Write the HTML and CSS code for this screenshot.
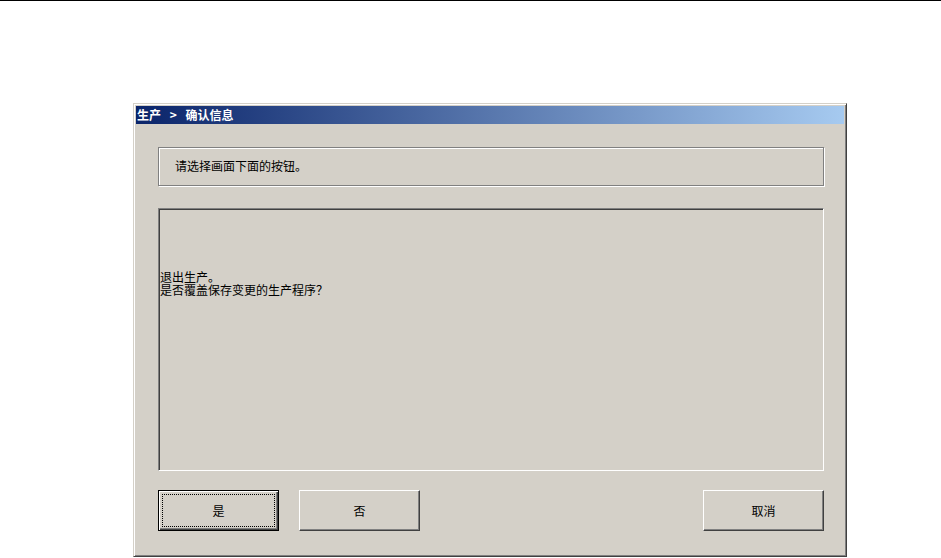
FILE: index.html
```html
<!DOCTYPE html>
<html lang="zh">
<head>
<meta charset="utf-8">
<title>确认信息</title>
<link rel="stylesheet" href="styles.css">
</head>
<body>
<div class="topline"></div>
<div class="window">
  <div class="titlebar">生产 &gt; 确认信息</div>
  <div class="content">
    <div class="hint">请选择画面下面的按钮。</div>
    <div class="message">
      <div class="msgline">退出生产。</div>
      <div class="msgline">是否覆盖保存变更的生产程序？</div>
    </div>
    <div class="buttons">
      <button class="btn default">是</button>
      <button class="btn">否</button>
      <button class="btn cancel">取消</button>
    </div>
  </div>
</div>
</body>
</html>
```
FILE: styles.css
```css
* { box-sizing: border-box; }
html, body { margin: 0; padding: 0; background: #fff; }
body {
  font-family: "Noto Sans CJK SC", "Liberation Sans", sans-serif;
  font-size: 12px;
  color: #000;
  width: 941px;
  height: 558px;
  overflow: hidden;
}
.topline { height: 1px; background: #000; }
.window {
  margin: 102px 0 0 133px;
  width: 714px;
  height: 454px;
  background: #d4d0c8;
  border: 1px solid;
  border-color: #d4d0c8 #404040 #404040 #d4d0c8;
  box-shadow: inset 1px 1px 0 #fff, inset -1px -1px 0 #808080;
  padding: 2px;
  display: flex;
  flex-direction: column;
}
.titlebar {
  height: 18px;
  line-height: 18px;
  padding-left: 1px;
  color: #fff;
  font-weight: bold;
  font-size: 12px;
  word-spacing: 6px;
  background: linear-gradient(to right, #0a246a 0%, #a6caf0 100%);
}
.content {
  padding: 23px 20px 0 22px;
  display: flex;
  flex-direction: column;
}
.hint {
  height: 39px;
  border: 1px solid #808080;
  box-shadow: inset 1px 1px 0 #fff, 1px 1px 0 #fff;
  padding-left: 16px;
  line-height: 36px;
  margin-bottom: 22px;
}
.message {
  height: 263px;
  border: 1px solid;
  border-color: #808080 #fff #fff #808080;
  box-shadow: inset 1px 1px 0 #404040, inset -1px -1px 0 #d4d0c8;
  padding: 61px 0 0 1px;
}
.msgline { line-height: 13px; height: 13px; }
.buttons {
  margin-top: 19px;
  display: flex;
  gap: 20px;
}
.btn {
  width: 121px;
  height: 41px;
  background: #d4d0c8;
  font-family: inherit;
  font-size: 12px;
  color: #000;
  padding: 0;
  margin: 0;
  border: 1px solid;
  border-color: #fff #404040 #404040 #fff;
  box-shadow: inset -1px -1px 0 #808080, inset 1px 1px 0 #d4d0c8;
}
.btn.default {
  border-color: #000;
  box-shadow: inset 1px 1px 0 #fff, inset -1px -1px 0 #404040, inset -2px -2px 0 #808080;
  outline: 1px dotted #000;
  outline-offset: -5px;
}
.btn.cancel { margin-left: auto; }
```
